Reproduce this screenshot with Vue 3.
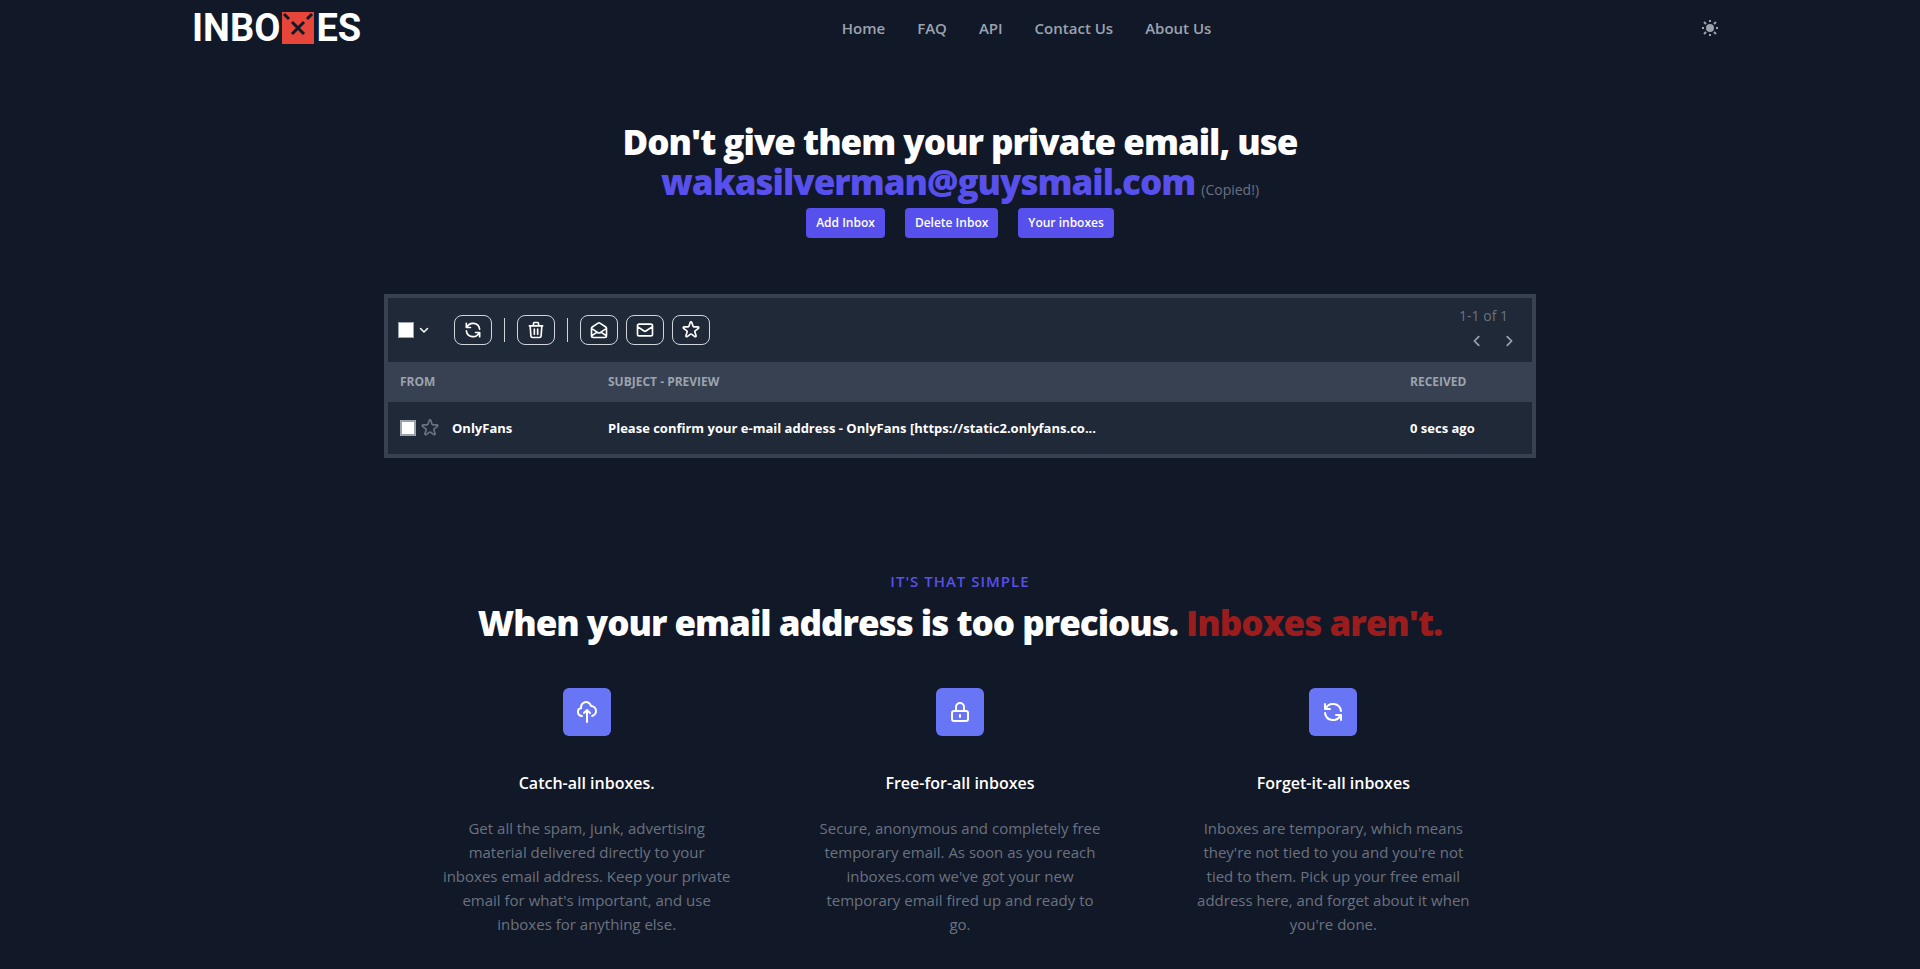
<script setup>
import { computed, ref } from 'vue'

const navLinks = ['Home', 'FAQ', 'API', 'Contact Us', 'About Us']

const icons = {
  refresh: 'M4 4v5h.582m15.356 2A8.001 8.001 0 004.582 9m0 0H9m11 11v-5h-.581m0 0a8.003 8.003 0 01-15.357-2m15.357 2H15',
  trash: 'M19 7l-.867 12.142A2 2 0 0116.138 21H7.862a2 2 0 01-1.995-1.858L5 7m5 4v6m4-6v6m1-10V4a1 1 0 00-1-1h-4a1 1 0 00-1 1v3M4 7h16',
  open: 'M3 19v-8.93a2 2 0 01.89-1.664l7-4.666a2 2 0 012.22 0l7 4.666A2 2 0 0121 10.07V19M3 19a2 2 0 002 2h14a2 2 0 002-2M3 19l6.75-4.5M21 19l-6.75-4.5M3 10l6.75 4.5M21 10l-6.75 4.5m0 0l-1.14.76a2 2 0 01-2.22 0l-1.14-.76',
  mail: 'M3 8l7.89 5.26a2 2 0 002.22 0L21 8M5 19h14a2 2 0 002-2V7a2 2 0 00-2-2H5a2 2 0 00-2 2v10a2 2 0 002 2z',
  star: 'M11.049 2.927c.3-.921 1.603-.921 1.902 0l1.519 4.674a1 1 0 00.95.69h4.915c.969 0 1.371 1.24.588 1.81l-3.976 2.888a1 1 0 00-.363 1.118l1.518 4.674c.3.922-.755 1.688-1.538 1.118l-3.976-2.888a1 1 0 00-1.176 0l-3.976 2.888c-.783.57-1.838-.197-1.538-1.118l1.518-4.674a1 1 0 00-.363-1.118l-3.976-2.888c-.784-.57-.38-1.81.588-1.81h4.914a1 1 0 00.951-.69l1.519-4.674z',
  upload: 'M7 16a4 4 0 01-.88-7.903A5 5 0 1115.9 6L16 6a5 5 0 011 9.9M15 13l-3-3m0 0l-3 3m3-3v12',
  lock: 'M12 15v2m-6 4h12a2 2 0 002-2v-6a2 2 0 00-2-2H6a2 2 0 00-2 2v6a2 2 0 002 2zm10-10V7a4 4 0 00-8 0v4h8z',
}

const toolGroups = [
  [{ icon: 'refresh', label: 'Refresh' }],
  [{ icon: 'trash', label: 'Delete' }],
  [
    { icon: 'open', label: 'Mark as read' },
    { icon: 'mail', label: 'Mark as unread' },
    { icon: 'star', label: 'Star' },
  ],
]

const messages = ref([
  {
    id: 1,
    from: 'OnlyFans',
    subject: 'Please confirm your e-mail address - OnlyFans [https://static2.onlyfans.co...',
    received: '0 secs ago',
    selected: false,
  },
])

const allSelected = computed({
  get: () => messages.value.every((item) => item.selected),
  set: (value) => messages.value.forEach((item) => { item.selected = value }),
})

const features = [
  {
    icon: 'upload',
    title: 'Catch-all inboxes.',
    text: "Get all the spam, junk, advertising material delivered directly to your inboxes email address. Keep your private email for what's important, and use inboxes for anything else.",
  },
  {
    icon: 'lock',
    title: 'Free-for-all inboxes',
    text: "Secure, anonymous and completely free temporary email. As soon as you reach inboxes.com we've got your new temporary email fired up and ready to go.",
  },
  {
    icon: 'refresh',
    title: 'Forget-it-all inboxes',
    text: "Inboxes are temporary, which means they're not tied to you and you're not tied to them. Pick up your free email address here, and forget about it when you're done.",
  },
]
</script>

<template>
  <div class="page">
    <header class="topbar">
      <a class="logo" href="#" aria-label="Inboxes">
        <span>INBO</span>
        <svg viewBox="0 0 32 32" aria-hidden="true">
          <rect width="32" height="32" fill="#e8453a" />
          <path d="M2 2l5 5M30 2l-5 5M10 10l12 12M22 10L10 22" stroke="#111827" stroke-width="3" />
        </svg>
        <span>ES</span>
      </a>
      <nav class="links">
        <a v-for="link in navLinks" :key="link" href="#">{{ link }}</a>
      </nav>
      <button class="theme" type="button" aria-label="Toggle theme">
        <svg viewBox="0 0 16 16" fill="none" stroke="currentColor" stroke-width="2">
          <circle cx="8" cy="8" r="4" fill="currentColor" stroke="none" />
          <path d="M8 0v2M8 14v2M0 8h2M14 8h2M2 2l2 2M12 12l2 2M2 14l2-2M12 4l2-2" />
        </svg>
      </button>
    </header>

    <main>
      <section class="hero">
        <h1>
          Don't give them your private email, use<br>
          <span class="address">wakasilverman@guysmail.com</span>
          <small>(Copied!)</small>
        </h1>
        <div class="actions">
          <button type="button">Add Inbox</button>
          <button type="button">Delete Inbox</button>
          <button type="button">Your inboxes</button>
        </div>
      </section>

      <section class="mailbox">
        <div class="toolbar">
          <div class="select-all">
            <input v-model="allSelected" type="checkbox" aria-label="Select all">
            <button type="button" aria-label="Selection options">
              <svg class="icon" viewBox="0 0 24 24"><path d="M5 9l7 7 7-7" stroke-width="3" /></svg>
            </button>
          </div>
          <div v-for="(group, index) in toolGroups" :key="index" class="group">
            <button v-for="tool in group" :key="tool.icon" class="tool" type="button" :aria-label="tool.label">
              <svg class="icon" viewBox="0 0 24 24"><path :d="icons[tool.icon]" /></svg>
            </button>
          </div>
          <div class="pager">
            <span>1-1 of 1</span>
            <div class="pager-buttons">
              <button type="button" aria-label="Previous page">
                <svg class="icon" viewBox="0 0 16 16"><path d="M10 3L5 8l5 5" /></svg>
              </button>
              <button type="button" aria-label="Next page">
                <svg class="icon" viewBox="0 0 16 16"><path d="M6 3l5 5-5 5" /></svg>
              </button>
            </div>
          </div>
        </div>

        <table>
          <thead>
            <tr>
              <th class="col-from">From</th>
              <th>Subject - Preview</th>
              <th class="col-received">Received</th>
            </tr>
          </thead>
          <tbody>
            <tr v-for="item in messages" :key="item.id">
              <td>
                <div class="sender">
                  <input v-model="item.selected" type="checkbox" :aria-label="`Select ${item.from}`">
                  <button type="button" aria-label="Star message">
                    <svg class="icon" viewBox="0 0 24 24"><path :d="icons.star" /></svg>
                  </button>
                  <span>{{ item.from }}</span>
                </div>
              </td>
              <td>{{ item.subject }}</td>
              <td>{{ item.received }}</td>
            </tr>
          </tbody>
        </table>
      </section>

      <section class="about">
        <p class="eyebrow">It's that simple</p>
        <h2>When your email address is too precious. <span>Inboxes aren't.</span></h2>
        <div class="features">
          <article v-for="item in features" :key="item.title" class="feature">
            <div class="badge">
              <svg class="icon" viewBox="0 0 24 24"><path :d="icons[item.icon]" /></svg>
            </div>
            <h3>{{ item.title }}</h3>
            <p>{{ item.text }}</p>
          </article>
        </div>
      </section>
    </main>
  </div>
</template>

<style>
body {
  margin: 0;
  background: #111827;
}
</style>

<style scoped>
.page {
  color: #fff;
  font-family: 'Segoe UI', 'Open Sans', 'Noto Sans', sans-serif;
  font-size: 15px;
  line-height: 24px;
}

button {
  padding: 0;
  border: 0;
  background: none;
  color: inherit;
  font: inherit;
  cursor: pointer;
}

svg {
  display: block;
}

.icon {
  fill: none;
  stroke: currentColor;
  stroke-width: 2;
  stroke-linecap: round;
  stroke-linejoin: round;
}

.topbar {
  display: flex;
  align-items: center;
  justify-content: space-between;
  width: 80%;
  height: 56px;
  margin: 0 auto;
}

.logo {
  display: flex;
  align-items: center;
  gap: 2px;
  color: #fff;
  font-family: Roboto, sans-serif;
  font-size: 38px;
  font-weight: 700;
  line-height: 56px;
  text-decoration: none;
}

.logo svg {
  width: 32px;
  height: 32px;
}

.links {
  display: flex;
  gap: 32px;
}

.links a {
  color: #9ca3af;
  font-weight: 600;
  text-decoration: none;
}

.theme {
  padding: 10px;
  color: #9ca3af;
}

.theme svg {
  width: 16px;
  height: 16px;
}

.hero {
  padding-top: 66px;
  text-align: center;
}

h1,
h2 {
  margin: 0;
  font-size: 35px;
  font-weight: 800;
  line-height: 40px;
  letter-spacing: -1px;
}

.address {
  color: #5850ec;
}

h1 small {
  margin-left: 6px;
  color: #6b7280;
  font-size: 14px;
  font-weight: 400;
  line-height: 16px;
  letter-spacing: 0;
}

.actions {
  display: flex;
  justify-content: center;
  gap: 20px;
  margin-top: 6px;
}

.actions button {
  padding: 7px 10px;
  border-radius: 4px;
  background: #5850ec;
  font-size: 12px;
  font-weight: 600;
  line-height: 16px;
}

.mailbox {
  width: 60%;
  box-sizing: border-box;
  margin: 56px auto 0;
  border: 4px solid #374151;
  background: #1f2937;
}

.toolbar {
  display: flex;
  align-items: center;
  height: 64px;
  padding: 0 16px 0 10px;
}

input[type='checkbox'] {
  appearance: none;
  width: 16px;
  height: 16px;
  margin: 0;
  border: 1px solid #9ca3af;
  background: #fff;
}

input[type='checkbox']:checked {
  background: #5850ec;
}

.select-all {
  display: flex;
  align-items: center;
  gap: 4px;
  width: 56px;
}

.select-all svg {
  width: 12px;
  height: 12px;
}

.group {
  display: flex;
  align-items: center;
  gap: 8px;
}

.group + .group::before {
  content: '';
  width: 1px;
  height: 24px;
  margin: 0 4px 0 12px;
  background: #d1d5db;
}

.tool {
  padding: 4px 8px;
  border: 1px solid #d1d5db;
  border-radius: 8px;
}

.tool svg,
.sender svg {
  width: 20px;
  height: 20px;
}

.pager {
  margin-left: auto;
  color: #6b7280;
  text-align: right;
}

.pager span {
  padding-right: 8px;
  font-size: 14px;
}

.pager-buttons {
  display: flex;
  justify-content: flex-end;
  gap: 18px;
  padding: 6px 0 10px;
  color: #9ca3af;
}

.pager-buttons svg {
  width: 14px;
  height: 14px;
}

table {
  width: 100%;
  border-collapse: collapse;
  table-layout: fixed;
  text-align: left;
}

th,
td {
  padding: 0 12px;
}

th {
  height: 40px;
  background: #374151;
  color: #9ca3af;
  font-size: 12px;
  font-weight: 700;
  line-height: 16px;
  text-transform: uppercase;
}

td {
  height: 52px;
  font-size: 13px;
  font-weight: 700;
  white-space: nowrap;
}

.col-from {
  width: 184px;
}

.col-received {
  width: 110px;
}

.sender {
  display: flex;
  align-items: center;
}

.sender input {
  border-width: 2px;
}

.sender button {
  margin: 0 12px 0 4px;
  color: #6b7280;
}

.about {
  width: 60%;
  box-sizing: border-box;
  margin: 111px auto 0;
  padding: 0 32px;
  text-align: center;
}

.eyebrow {
  margin: 0;
  color: #5850ec;
  font-weight: 600;
  letter-spacing: 1px;
  text-transform: uppercase;
}

h2 {
  margin-top: 10px;
}

h2 span {
  color: #9b1c1c;
}

.features {
  display: grid;
  grid-template-columns: repeat(3, 1fr);
  gap: 32px;
  margin-top: 45px;
}

.feature {
  padding: 0 26px;
}

.badge {
  display: inline-block;
  padding: 12px;
  border-radius: 6px;
  background: #6875f5;
}

.badge svg {
  width: 24px;
  height: 24px;
}

.feature h3 {
  margin: 29px 0 21px;
  font-size: 16px;
  font-weight: 600;
}

.feature p {
  margin: 0;
  color: #6b7280;
}
</style>
